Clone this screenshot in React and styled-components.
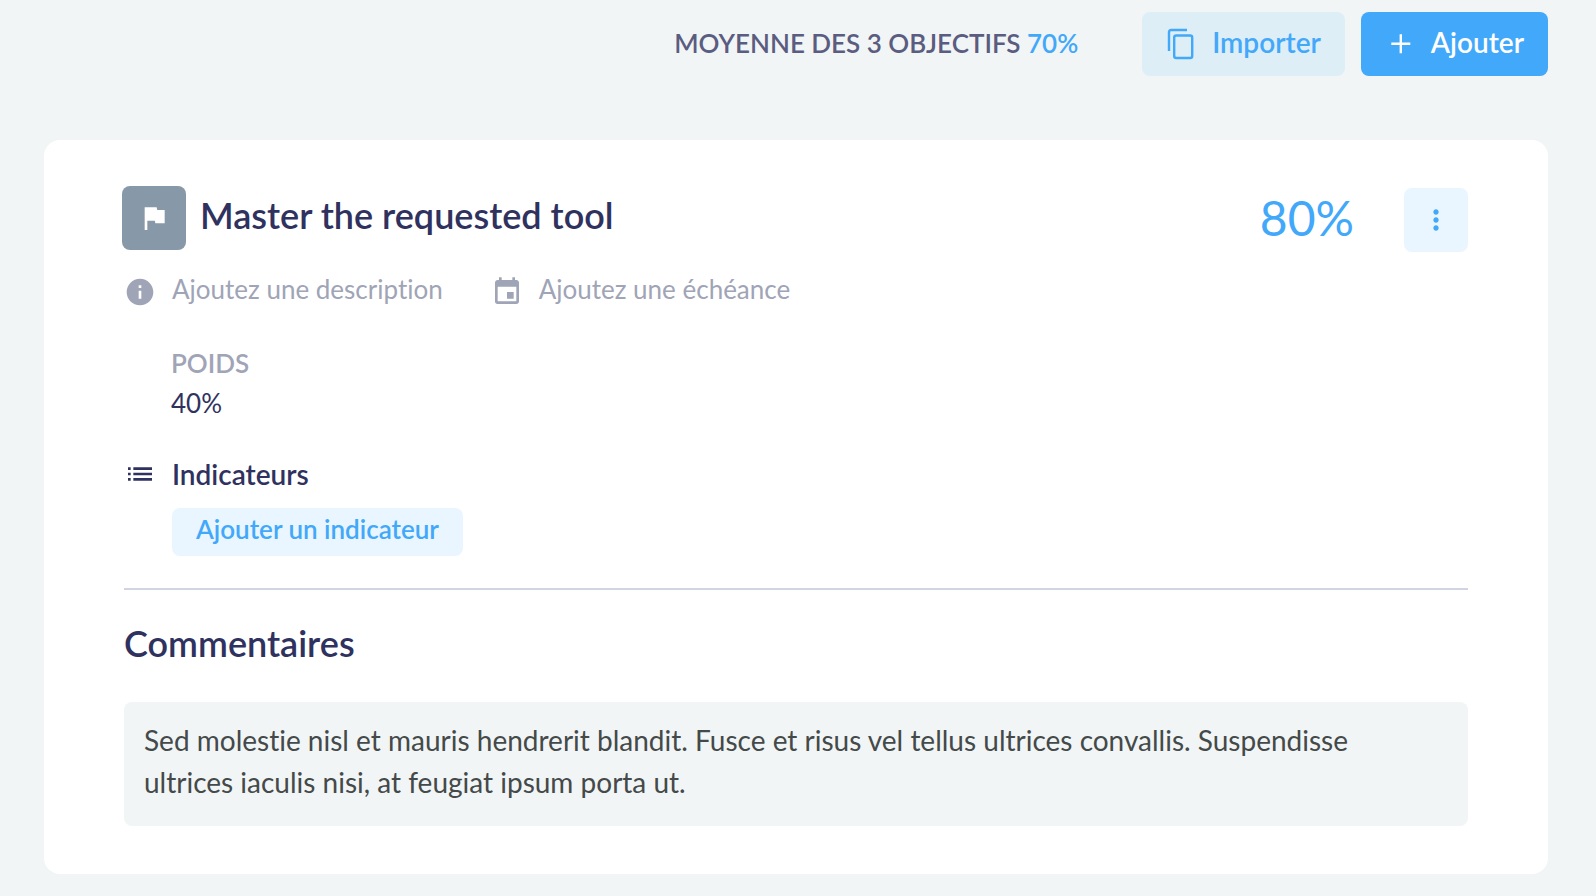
import React from "react"
import styled, { createGlobalStyle } from "styled-components"
import { MdEvent, MdFlag, MdInfo, MdList, MdMoreVert } from "react-icons/md"

const color = {
  page: "#f1f5f6",
  blue: "#42a8f9",
  paleBlue: "#e9f6ff",
  navy: "#2f325e",
  muted: "#9fa4b6",
  slate: "#8798a8"
}

const GlobalStyle = createGlobalStyle`
  * {
    box-sizing: border-box;
  }

  body {
    margin: 0;
    background: ${color.page};
    color: ${color.navy};
    font-family: Lato, "Liberation Sans", sans-serif;
    font-variant-ligatures: none;
  }

  h1, h2, h3, p, dl, dt, dd {
    margin: 0;
  }

  button {
    border: 0;
    border-radius: 8px;
    font-family: inherit;
    font-variant-ligatures: inherit;
    cursor: pointer;
  }
`

const Page = styled.main`
  padding: 12px 48px 22px 44px;
`

const Toolbar = styled.header`
  display: flex;
  align-items: center;
  justify-content: flex-end;
  gap: 16px;
  margin-bottom: 64px;
`

const Average = styled.p`
  margin-right: 48px;
  padding-bottom: 2px;
  color: #5a5c80;
  font-size: 26px;
  font-weight: 600;
  line-height: 32px;
  text-transform: uppercase;

  & > strong {
    color: ${color.blue};
    font-weight: 600;
  }
`

const ToolbarButton = styled.button`
  display: flex;
  align-items: center;
  gap: 14px;
  height: 64px;
  padding: 0 24px;
  background: ${p => (p.$primary ? color.blue : "#deeef7")};
  color: ${p => (p.$primary ? "#fff" : color.blue)};
  font-size: 28px;
  font-weight: 600;
  line-height: 32px;

  & > span {
    padding-bottom: 4px;
  }
`

const Card = styled.article`
  padding: 46px 80px 48px 78px;
  border-radius: 16px;
  background: #fff;
`

const CardHeader = styled.header`
  display: flex;
  min-height: 66px;
`

const Badge = styled.div`
  display: flex;
  align-items: center;
  justify-content: center;
  width: 64px;
  height: 64px;
  margin-right: 14px;
  border-radius: 8px;
  background: ${color.slate};
  color: #fff;
`

const Title = styled.h1`
  flex: 1;
  font-size: 36px;
  font-weight: 600;
  line-height: 58px;
`

const Score = styled.p`
  margin-right: 50px;
  color: ${color.blue};
  font-size: 48px;
  line-height: 64px;
`

const MenuButton = styled.button`
  display: flex;
  align-items: center;
  justify-content: center;
  align-self: flex-end;
  width: 64px;
  height: 64px;
  padding: 0;
  background: ${color.paleBlue};
  color: ${color.blue};
`

const Content = styled.div`
  padding-left: 2px;
`

const Hints = styled.div`
  display: flex;
  gap: 48px;
  margin-top: 24px;
`

const Hint = styled.button`
  display: flex;
  align-items: flex-start;
  gap: 16px;
  padding: 0;
  background: none;
  color: ${color.muted};
  font-size: 26px;
  line-height: 26px;
`

const Weight = styled.dl`
  margin: 39px 0;
  padding-left: 47px;
  font-size: 26px;
  line-height: 32px;

  & > dt {
    margin-bottom: 8px;
    color: ${color.muted};
    font-weight: 600;
    text-transform: uppercase;
  }
`

const SectionTitle = styled.h2`
  display: flex;
  gap: 16px;
  font-size: 28px;
  font-weight: 600;
  line-height: 32px;
`

const AddIndicator = styled.button`
  display: block;
  height: 48px;
  margin: 18px 0 32px 48px;
  padding: 0 24px 6px;
  background: ${color.paleBlue};
  color: ${color.blue};
  font-size: 26px;
  font-weight: 600;
  line-height: 42px;
`

const Comments = styled.section`
  padding-top: 30px;
  border-top: 2px solid #d0d5e1;

  & > h2 {
    margin-bottom: 36px;
    font-size: 36px;
    font-weight: 600;
    line-height: 46px;
  }
`

const Comment = styled.p`
  padding: 17px 32px 23px 20px;
  border-radius: 8px;
  background: ${color.page};
  color: #444949;
  font-size: 28px;
  line-height: 42px;
`

const CopyIcon = () => (
  <svg width="32" height="32" viewBox="0 0 32 32" fill="none" stroke="currentColor" strokeWidth="2.4" aria-hidden="true">
    <path d="M3 23V4a2 2 0 0 1 2-2h16" />
    <rect x="8.2" y="7.5" width="18" height="22.5" rx="2" />
  </svg>
)

const PlusIcon = () => (
  <svg width="32" height="32" viewBox="0 0 32 32" fill="none" stroke="currentColor" strokeWidth="2.4" aria-hidden="true">
    <path d="M15.8 6.2v19M6.3 15.8h19" />
  </svg>
)

const App = () => (
  <>
    <GlobalStyle />
    <Page>
      <Toolbar>
        <Average>Moyenne des 3 objectifs <strong>70%</strong></Average>
        <ToolbarButton type="button">
          <CopyIcon />
          <span>Importer</span>
        </ToolbarButton>
        <ToolbarButton type="button" $primary>
          <PlusIcon />
          <span>Ajouter</span>
        </ToolbarButton>
      </Toolbar>

      <Card>
        <CardHeader>
          <Badge><MdFlag size={32} /></Badge>
          <Title>Master the requested tool</Title>
          <Score>80%</Score>
          <MenuButton type="button" aria-label="Options">
            <MdMoreVert size={32} />
          </MenuButton>
        </CardHeader>

        <Content>
          <Hints>
            <Hint type="button"><MdInfo size={32} />Ajoutez une description</Hint>
            <Hint type="button"><MdEvent size={32} />Ajoutez une échéance</Hint>
          </Hints>
          <Weight>
            <dt>Poids</dt>
            <dd>40%</dd>
          </Weight>
          <SectionTitle><MdList size={32} />Indicateurs</SectionTitle>
          <AddIndicator type="button">Ajouter un indicateur</AddIndicator>
          <Comments>
            <h2>Commentaires</h2>
            <Comment>
              Sed molestie nisl et mauris hendrerit blandit. Fusce et risus vel tellus ultrices
              convallis. Suspendisse ultrices iaculis nisi, at feugiat ipsum porta ut.
            </Comment>
          </Comments>
        </Content>
      </Card>
    </Page>
  </>
)

export default App
